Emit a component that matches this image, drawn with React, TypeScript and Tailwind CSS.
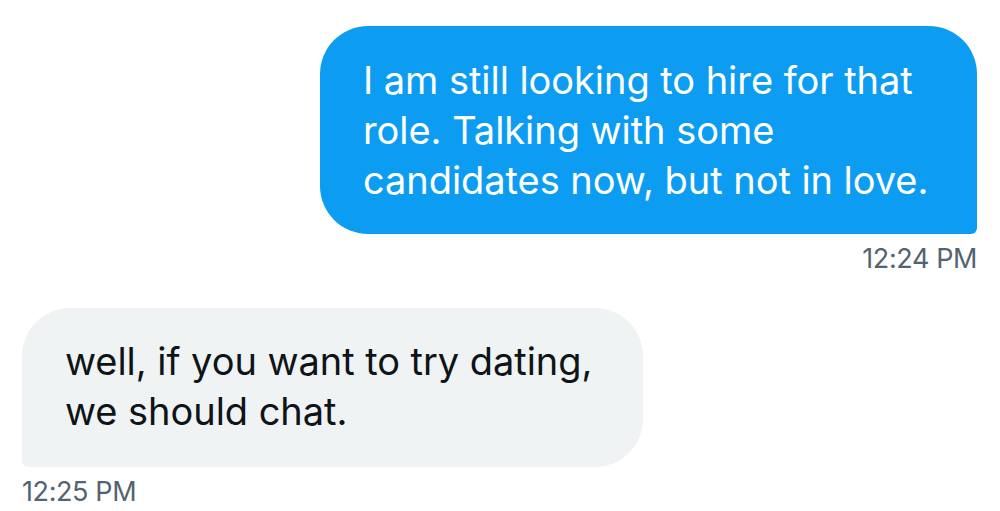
export default function App() {
  return (
    <div className="w-[1000px] h-[511px] bg-white overflow-hidden flex flex-col px-[22px] pt-[26px]" style={{ fontFamily: "Inter, 'Noto Sans', sans-serif" }}>
      <div className="flex flex-col items-end pr-px">
        <div className="w-[657px] h-[208px] bg-[#0c9df2] text-white rounded-[48px] rounded-br-[6px] pl-[43px] pr-[10px] pt-[29px] text-[38px] leading-[50px] tracking-[-0.05px]">
          I am still looking to hire for that
          <br />
          role. Talking with some
          <br />
          candidates now, but not in love.
        </div>
        <div className="mt-[10px] text-[27px] leading-[30px] text-[#536471] tracking-[-0.4px]">12:24 PM</div>
      </div>
      <div className="mt-[34px] flex flex-col items-start">
        <div className="w-[621px] h-[159px] bg-[#eff3f4] text-[#0f1419] rounded-[48px] rounded-bl-[6px] pl-[43px] pt-[28px] text-[38px] leading-[50px] tracking-[-0.05px]">
          well, if you want to try dating,
          <br />
          we should chat.
        </div>
        <div className="mt-[10px] text-[27px] leading-[30px] text-[#536471] tracking-[-0.4px]">12:25 PM</div>
      </div>
    </div>
  );
}
